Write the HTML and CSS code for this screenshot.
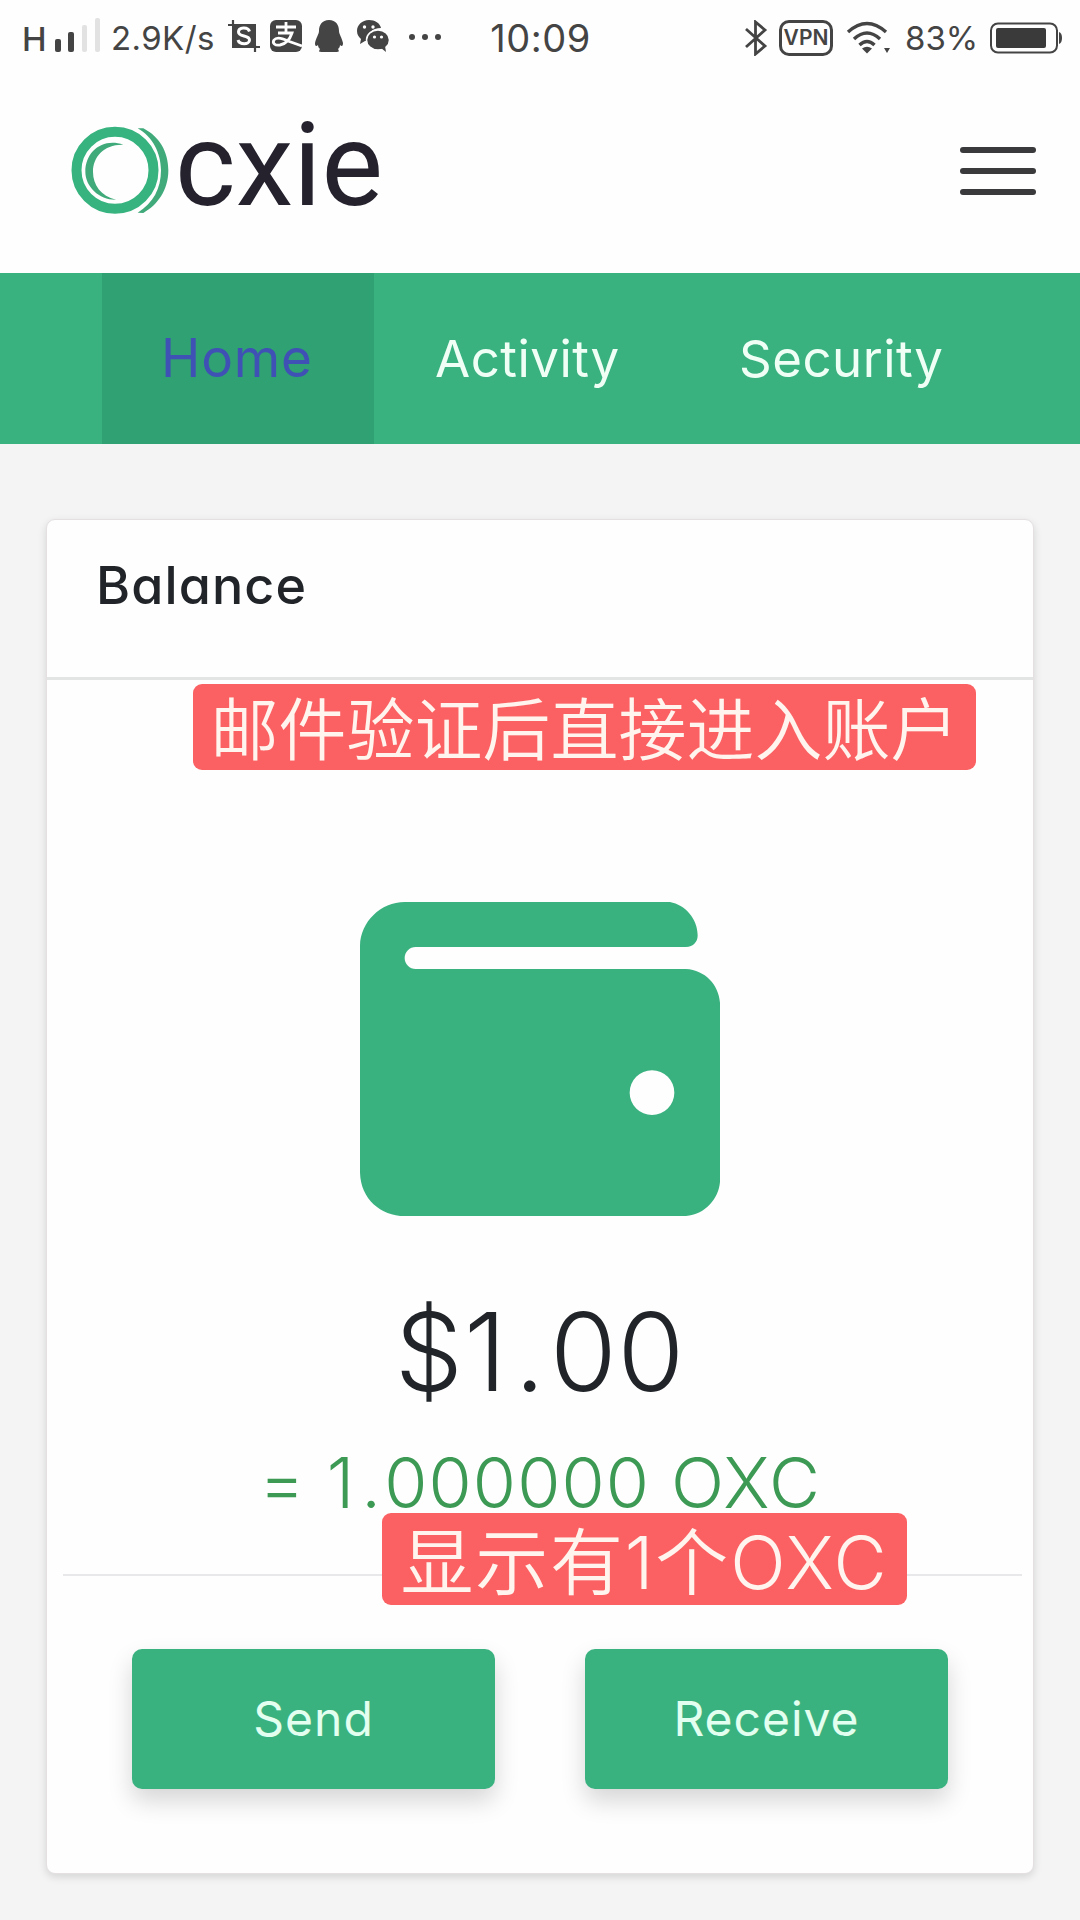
FILE: index.html
```html
<!DOCTYPE html>
<html lang="zh">
<head>
    <meta charset="UTF-8">
    <title>Ocxie</title>
    <link rel="stylesheet" href="styles.css">
</head>
<body>
    <div class="status-bar">
        <div class="status-left">
            <span class="network">H</span>
            <svg class="signal" width="48" height="36" viewBox="0 0 48 36">
                <rect x="1" y="21" width="6" height="13" rx="2" fill="#444"/>
                <rect x="14" y="14" width="6" height="20" rx="2" fill="#444"/>
                <rect x="28" y="7" width="5" height="27" rx="2" fill="#e2e2e2"/>
                <rect x="41" y="0" width="5" height="34" rx="2" fill="#e2e2e2"/>
            </svg>
            <span class="speed">2.9K/s</span>
            <svg class="icon-crop" width="32" height="32" viewBox="0 0 32 32">
                <path d="M4 4h24v24H4z" fill="#444"/>
                <path d="M0 5h6M5 0v6M26 27h6M27 25v7" stroke="#444" stroke-width="2.200"/>
                <path d="M21.500 11.500C20 6.500 10.500 7 10.500 12c0 5.500 11 2.500 11 8 0 5-10 5-11.500 0" fill="none" stroke="#fff" stroke-width="3"/>
            </svg>
            <svg class="icon-pay" width="34" height="34" viewBox="0 0 34 34">
                <rect x="1" y="1" width="32" height="32" rx="6" fill="#444"/>
                <path d="M7 8h20M17 3v11M9 14h14c-2 6-6 11-12 12-5 1-8-2-6-5 3-4 10-1 14 1l14 5" fill="none" stroke="#fff" stroke-width="2.800"/>
            </svg>
            <svg class="icon-qq" width="28" height="34" viewBox="0 0 28 34">
                <path d="M14 1c7 0 10 5 10 11 0 3 3 7 4 12 0 3-1 4-3 2 0 2-1 3-2 4 2 3 0 3-3 3H8c-3 0-5 0-3-3-1-1-2-2-2-4-2 2-3 1-3-2 1-5 4-9 4-12C4 6 7 1 14 1z" fill="#444"/>
            </svg>
            <svg class="icon-wechat" width="34" height="34" viewBox="0 0 34 34">
                <path d="M13 1C6 1 1 6 1 12c0 4 2 6 4 8l-1 5 5-3h5C11 14 16 9 25 9 24 4 19 1 13 1z" fill="#444"/>
                <ellipse cx="22" cy="21" rx="11.500" ry="10" fill="#444" stroke="#fff" stroke-width="1.500"/>
                <path d="M25 29l5 4-1-6z" fill="#444"/>
                <g fill="#fff">
                    <circle cx="8.500" cy="8" r="1.700"/>
                    <circle cx="17" cy="8" r="1.700"/>
                    <circle cx="18.500" cy="18" r="1.600"/>
                    <circle cx="25.500" cy="18" r="1.600"/>
                </g>
            </svg>
            <svg class="icon-more" width="34" height="8" viewBox="0 0 34 8">
                <circle cx="4" cy="4" r="3" fill="#444"/>
                <circle cx="17" cy="4" r="3" fill="#444"/>
                <circle cx="30" cy="4" r="3" fill="#444"/>
            </svg>
        </div>
        <span class="clock">10:09</span>
        <div class="status-right">
            <svg width="24" height="36" viewBox="0 0 24 36">
                <path d="M2 9l19 17-9.500 8V2L21 10 2 27" fill="none" stroke="#444" stroke-width="2.800"/>
            </svg>
            <span class="vpn">VPN</span>
            <svg class="wifi" width="46" height="34" viewBox="0 0 46 34">
                <g fill="none" stroke="#444" stroke-width="3.400">
                    <path d="M3 11Q22-6 41 11"/>
                    <path d="M9 18Q22 6 35 18"/>
                    <path d="M14.500 24Q22 17 29.500 24"/>
                </g>
                <path d="M17 27.500q5-3.500 10 0l-5 5z" fill="#444"/>
                <path d="M39 27h6l-3 5z" fill="#444"/>
            </svg>
            <span class="percent">83%</span>
            <svg class="battery" width="73" height="32" viewBox="0 0 73 32">
                <rect x="1" y="1.500" width="66" height="29" rx="7" fill="none" stroke="#444" stroke-width="2"/>
                <rect x="6" y="6" width="50" height="20" rx="2" fill="#3a3a3a"/>
                <path d="M69 10q3 1 3 6t-3 6z" fill="#444"/>
            </svg>
        </div>
    </div>

    <header class="header">
        <div class="logo">
            <svg width="106" height="100" viewBox="0 0 318 300">
                <circle cx="147" cy="151" r="115.500" fill="none" stroke="#36b37e" stroke-width="30"/>
                <path d="M215 25h17C280 50 307 95 307 151c0 59-32 104-75 128l-17-1c47-28 70-73 70-127C285 100 260 50 215 25z" fill="#40aa7b"/>
                <path d="M172 74C110 52 58 95 58 155c0 45 42 85 92 84C105 228 81 195 81 155c0-45 34-83 91-81z" fill="#40aa7b"/>
            </svg>
            <span class="logo-text">cxie</span>
        </div>
        <div class="menu">
            <span></span>
            <span></span>
            <span></span>
        </div>
    </header>

    <nav class="nav">
        <a class="nav-home active">Home</a>
        <a class="nav-activity">Activity</a>
        <a class="nav-security">Security</a>
    </nav>

    <main class="content">
        <div class="card">
            <div class="card-header"><h2>Balance</h2></div>
            <div class="card-body">
                <svg class="wallet" width="360" height="314" viewBox="0 0 1080 942">
                    <path fill="#3ab280" fill-rule="evenodd" d="M134 0H930C975 8 1013 50 1013 100C1013 120 1000 135 978 135H167A33 33 0 0 0 167 201H978C1035 204 1076 248 1080 302V840C1076 890 1035 938 978 942H134C62 942 2 890 0 812V130C2 60 62 0 134 0zM876 505a67 67 0 1 0 0 134a67 67 0 1 0 0-134z"/>
                </svg>
                <div class="amount">$1<span class="dot">.</span>00</div>
                <div class="coins">= 1<span class="dot">.</span>000000 OXC</div>
                <hr>
                <div class="buttons">
                    <button class="send">Send</button>
                    <button class="receive">Receive</button>
                </div>
            </div>
            <!-- Etiquetas superpuestas -->
            <div class="note note-top">邮件验证后直接进入账户</div>
            <div class="note note-bottom">显示有1个OXC</div>
        </div>
    </main>
</body>
</html>
```

FILE: styles.css
```css
* {
    box-sizing: border-box;
}

body {
    margin: 0;
    height: 1920px;
    overflow: hidden;
    background-color: #f4f4f4;
    font-family: Inter, "Noto Sans CJK SC", sans-serif;
    color: #212529;
}

.status-bar {
    height: 75px;
    padding: 0 17px 0 22px;
    display: flex;
    align-items: center;
    background-color: #fefefe;
    color: #444;
    white-space: nowrap;
}

.status-left {
    width: 469px;
    display: flex;
    align-items: center;
}

.network {
    width: 32px;
    font-size: 33px;
    font-weight: 500;
    line-height: 40px;
    padding-top: 3px;
}

.signal {
    width: 48px;
    margin-top: -4px;
}

.speed {
    width: 118px;
    margin-left: 9px;
    font-size: 33px;
    letter-spacing: 0.4px;
}

.icon-crop {
    margin: -3px 0 0 -1px;
}

.icon-pay {
    margin: -3px 0 0 9px;
}

.icon-qq {
    margin: -3px 0 0 12px;
}

.icon-wechat {
    margin: -3px 0 0 13px;
}

.icon-more {
    margin: -2px 0 0 18px;
}

.clock {
    width: 254px;
    font-size: 38px;
    letter-spacing: 0.5px;
}

.status-right {
    display: flex;
    align-items: center;
}

.vpn {
    width: 54px;
    height: 36px;
    margin-left: 11px;
    border: 3px solid #444;
    border-radius: 10px;
    font-size: 21px;
    font-weight: 600;
    line-height: 30px;
    text-align: center;
}

.wifi {
    margin-left: 12px;
}

.percent {
    width: 85px;
    margin-left: 14px;
    font-size: 33px;
}

.header {
    height: 198px;
    padding: 45px 44px 0 66px;
    display: flex;
    justify-content: space-between;
    background-color: #fefefe;
}

.logo {
    display: flex;
}

.logo-text {
    margin: -13px 0 0 3px;
    font-family: Roboto, sans-serif;
    font-size: 116px;
    line-height: 116px;
    color: #25222e;
}

.menu {
    width: 76px;
    height: 48px;
    margin-top: 27px;
    display: flex;
    flex-direction: column;
    justify-content: space-between;
}

.menu span {
    height: 6px;
    border-radius: 3px;
    background-color: #3a3a3c;
}

.nav {
    height: 171px;
    padding-left: 102px;
    display: flex;
    background-color: #3ab280;
    color: #effff6;
    font-size: 51px;
    line-height: 171px;
}

.nav a {
    padding-left: 61px;
    letter-spacing: 0.5px;
    white-space: nowrap;
}

.nav-home {
    width: 272px;
}

.nav-activity {
    width: 304px;
}

.nav .active {
    padding-left: 59px;
    background-color: #30a173;
    color: #3f51b5;
    font-size: 53px;
    letter-spacing: 0.8px;
}

.content {
    padding: 75px 46px 0;
}

.card {
    position: relative;
    height: 1355px;
    border: 1px solid #e4e0e2;
    border-radius: 9px;
    background-color: #fefefe;
    box-shadow: 0 3px 8px rgba(0, 0, 0, 0.13);
}

.card-header {
    height: 160px;
    padding: 36px 49px;
    border-bottom: 3px solid #e3e5e4;
}

.card-header h2 {
    margin: 0;
    font-size: 52px;
    font-weight: 500;
    line-height: 60px;
    letter-spacing: 1.1px;
    font-feature-settings: "cv11";
}

.card-body {
    padding: 222px 11px 0;
    display: flex;
    flex-direction: column;
    align-items: center;
}

.amount {
    margin-top: 76px;
    font-size: 108px;
    font-weight: 350;
    line-height: 120px;
    letter-spacing: 1px;
    white-space: nowrap;
}

.amount .dot {
    margin: 0 4px 0 7px;
}

.coins {
    margin-top: 31px;
    font-size: 70px;
    font-weight: 350;
    line-height: 80px;
    letter-spacing: 1.1px;
    color: #3d9a55;
    white-space: nowrap;
}

.coins .dot {
    margin: 0 2px 0 6px;
}

hr {
    align-self: flex-end;
    width: 959px;
    margin: 51px 0 0;
    border: 0;
    border-top: 2px solid #e8e8ea;
}

.buttons {
    margin-top: 73px;
    display: flex;
    gap: 90px;
}

button {
    width: 363px;
    height: 140px;
    padding: 0;
    border: none;
    border-radius: 10px;
    background-color: #3ab280;
    color: #e2ffef;
    font-family: inherit;
    font-size: 48px;
    line-height: 138px;
    letter-spacing: 1px;
    box-shadow: 0 12px 24px rgba(0, 0, 0, 0.16);
}

.note {
    position: absolute;
    border-radius: 9px;
    background-color: #fb6163;
    color: #fff4ee;
    font-weight: 350;
    text-align: center;
    white-space: nowrap;
}

.note-top {
    left: 146px;
    top: 164px;
    width: 783px;
    height: 86px;
    font-size: 68px;
    line-height: 92px;
}

.note-bottom {
    left: 335px;
    top: 993px;
    width: 525px;
    height: 92px;
    font-size: 73px;
    line-height: 100px;
    letter-spacing: 1.8px;
}
```
